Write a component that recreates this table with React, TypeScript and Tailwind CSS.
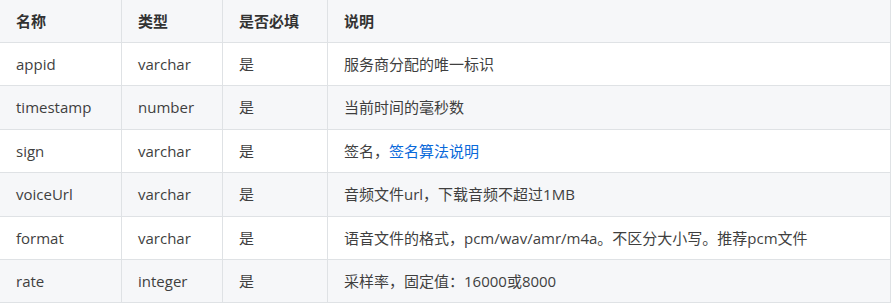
const rows = [
  { name: "appid", type: "varchar", required: "是", desc: <>服务商分配的唯一标识</> },
  { name: "timestamp", type: "number", required: "是", desc: <>当前时间的毫秒数</> },
  {
    name: "sign",
    type: "varchar",
    required: "是",
    desc: (
      <>
        签名，<a className="text-[#0969da]">签名算法说明</a>
      </>
    ),
  },
  { name: "voiceUrl", type: "varchar", required: "是", desc: <>音频文件url，下载音频不超过1MB</> },
  {
    name: "format",
    type: "varchar",
    required: "是",
    desc: <>语音文件的格式，pcm/wav/amr/m4a。不区分大小写。推荐pcm文件</>,
  },
  { name: "rate", type: "integer", required: "是", desc: <>采样率，固定值：16000或8000</> },
];

const cols = "grid grid-cols-[122px_101px_105px_562px]";

export default function App() {
  return (
    <div
      className="w-[891px] bg-white text-[15px] text-[#3f3f3f]"
      style={{ fontFamily: '"Open Sans", "Noto Sans CJK SC", sans-serif' }}
    >
      <div className="w-[891px] border-r border-[#dfe2e5]">
        <div className={`${cols} h-[43px] border-b border-[#dfe2e5] bg-[#f6f7f9] font-bold text-[#333]`}>
          {["名称", "类型", "是否必填", "说明"].map((h, i) => (
            <div
              key={h}
              className={`flex items-center pl-4 ${i < 3 ? "border-r border-[#dfe2e5]" : ""}`}
            >
              {h}
            </div>
          ))}
        </div>
        {rows.map((r, idx) => (
          <div
            key={r.name}
            className={`${cols} h-[43.4px] border-b border-[#dfe2e5] ${idx % 2 === 1 ? "bg-[#f6f7f9]" : "bg-white"}`}
          >
            <div className="flex items-center border-r border-[#dfe2e5] pl-4">{r.name}</div>
            <div className="flex items-center border-r border-[#dfe2e5] pl-4">{r.type}</div>
            <div className="flex items-center border-r border-[#dfe2e5] pl-4">{r.required}</div>
            <div className="flex items-center pl-4">{r.desc}</div>
          </div>
        ))}
      </div>
    </div>
  );
}
